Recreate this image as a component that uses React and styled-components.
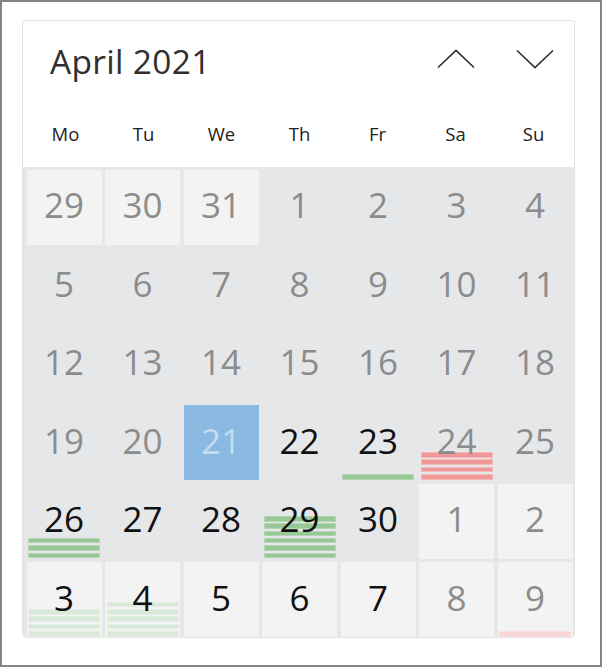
import React from "react";
import styled, { createGlobalStyle } from "styled-components";

const GlobalStyle = createGlobalStyle`
  html, body {
    margin: 0;
    padding: 0;
    background: #fff;
  }
  * {
    box-sizing: border-box;
  }
`;

const Frame = styled.div`
  width: 602px;
  height: 667px;
  border: 2px solid #848484;
  background: #fff;
  padding: 18px 0 0 20px;
  font-family: "Open Sans", "Noto Sans", sans-serif;
`;

const Card = styled.div`
  width: 553px;
  height: 618px;
  border: 1px solid #e3e3e3;
  border-radius: 4px;
  overflow: hidden;
  background: #fff;
  display: flex;
  flex-direction: column;
`;

const TitleRow = styled.div`
  height: 80px;
  display: flex;
  align-items: center;
`;

const Title = styled.div`
  flex: 1;
  padding-left: 27px;
  font-size: 33.5px;
  color: #2f2f2f;
  letter-spacing: 0.3px;
`;

const NavButton = styled.button`
  width: 78.7px;
  height: 50px;
  border: none;
  background: transparent;
  display: flex;
  align-items: center;
  justify-content: center;
  padding: 0;
  margin-top: -4px;
  cursor: pointer;
`;

const WeekRow = styled.div`
  height: 66px;
  display: grid;
  grid-template-columns: repeat(7, 1fr);
  align-items: center;
  padding: 0 1.5px 2px 3.5px;
`;

const WeekDay = styled.div`
  text-align: center;
  font-size: 18.5px;
  color: #222;
`;

const Grid = styled.div`
  flex: 1;
  background: #e6e7e9;
  display: grid;
  grid-template-columns: repeat(7, 75px);
  grid-template-rows: repeat(6, 75px);
  column-gap: 3.5px;
  row-gap: 3.5px;
  padding: 2.5px 0 0 3.5px;
`;

const Cell = styled.div`
  position: relative;
  background: ${(p) => (p.$selected ? "#8ab9e1" : p.$out ? "#f3f3f3" : "transparent")};
  display: flex;
  align-items: center;
  justify-content: center;
  padding-bottom: 5px;
`;

const Num = styled.span`
  position: relative;
  z-index: 1;
  font-size: 35px;
  line-height: 1;
  color: ${(p) => (p.$selected ? "#c4dcf1" : p.$muted ? "#8c8c8c" : "#111")};
`;

const Stripes = styled.div`
  position: absolute;
  left: 1.5px;
  right: 1.5px;
  bottom: 0.5px;
  display: flex;
  flex-direction: column;
  gap: 1.8px;
`;

const tones = {
  green: ["#98c898", "#b3d7b3"],
  red: ["#f09898", "#f5b8b8"],
  lightGreen: ["#d9e8d9", "#e4efe4"],
  lightRed: ["#f7d6d6", "#f9e1e1"],
};

const Stripe = styled.div`
  height: 5.5px;
  background: ${(p) => tones[p.$tone][0]};
  border: 1px solid ${(p) => tones[p.$tone][1]};
`;

const Chevron = ({ up }) => (
  <svg width="38" height="20" viewBox="0 0 38 20">
    <polyline
      points={up ? "1,18.5 19,1.5 37,18.5" : "1,1.5 19,18.5 37,1.5"}
      fill="none"
      stroke="#333"
      strokeWidth="1.7"
    />
  </svg>
);

const weekDays = ["Mo", "Tu", "We", "Th", "Fr", "Sa", "Su"];

const d = (n, opts = {}) => ({ n, ...opts });

const days = [
  d(29, { out: true, muted: true }),
  d(30, { out: true, muted: true }),
  d(31, { out: true, muted: true }),
  ...[1, 2, 3, 4, 5, 6, 7, 8, 9, 10, 11, 12, 13, 14, 15, 16, 17, 18, 19, 20].map((n) =>
    d(n, { muted: true })
  ),
  d(21, { selected: true }),
  d(22),
  d(23, { stripes: 1, tone: "green" }),
  d(24, { muted: true, stripes: 4, tone: "red" }),
  d(25, { muted: true }),
  d(26, { stripes: 3, tone: "green" }),
  d(27),
  d(28),
  d(29, { stripes: 6, tone: "green" }),
  d(30),
  d(1, { out: true, muted: true }),
  d(2, { out: true, muted: true }),
  d(3, { out: true, stripes: 4, tone: "lightGreen" }),
  d(4, { out: true, stripes: 5, tone: "lightGreen" }),
  d(5, { out: true }),
  d(6, { out: true }),
  d(7, { out: true }),
  d(8, { out: true, muted: true }),
  d(9, { out: true, muted: true, stripes: 1, tone: "lightRed" }),
];

export default function App() {
  return (
    <>
      <GlobalStyle />
      <Frame>
        <Card>
          <TitleRow>
            <Title>April 2021</Title>
            <NavButton aria-label="Previous month">
              <Chevron up />
            </NavButton>
            <NavButton aria-label="Next month">
              <Chevron />
            </NavButton>
          </TitleRow>
          <WeekRow>
            {weekDays.map((w) => (
              <WeekDay key={w}>{w}</WeekDay>
            ))}
          </WeekRow>
          <Grid>
            {days.map((day, i) => (
              <Cell key={i} $out={day.out} $selected={day.selected}>
                <Num $muted={day.muted} $selected={day.selected}>
                  {day.n}
                </Num>
                {day.stripes ? (
                  <Stripes>
                    {Array.from({ length: day.stripes }).map((_, k) => (
                      <Stripe key={k} $tone={day.tone} />
                    ))}
                  </Stripes>
                ) : null}
              </Cell>
            ))}
          </Grid>
        </Card>
      </Frame>
    </>
  );
}
